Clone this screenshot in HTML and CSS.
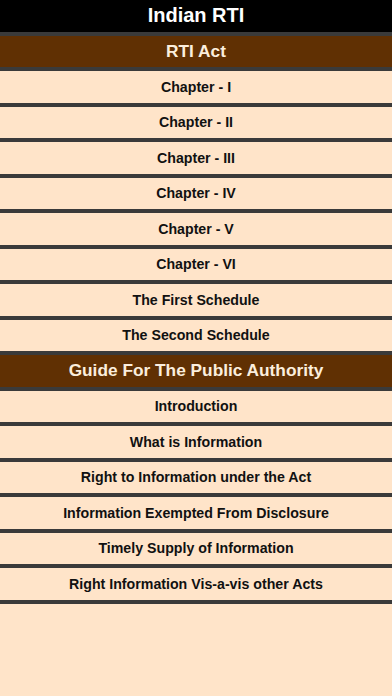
FILE: index.html
```html
<!DOCTYPE html>
<html>
<head>
<meta charset="utf-8">
<link rel="stylesheet" href="styles.css">
</head>
<body>
<div class="app">
  <div class="title">Indian RTI</div>
  <div class="section">RTI Act</div>
  <div class="item">Chapter - I</div>
  <div class="item">Chapter - II</div>
  <div class="item">Chapter - III</div>
  <div class="item">Chapter - IV</div>
  <div class="item">Chapter - V</div>
  <div class="item">Chapter - VI</div>
  <div class="item">The First Schedule</div>
  <div class="item">The Second Schedule</div>
  <div class="section">Guide For The Public Authority</div>
  <div class="item">Introduction</div>
  <div class="item">What is Information</div>
  <div class="item">Right to Information under the Act</div>
  <div class="item">Information Exempted From Disclosure</div>
  <div class="item">Timely Supply of Information</div>
  <div class="item">Right Information Vis-a-vis other Acts</div>
</div>
</body>
</html>
```
FILE: styles.css
```css
html, body {
  margin: 0;
  padding: 0;
  background: #ffe4c9;
  font-family: "Liberation Sans", Arial, sans-serif;
  font-weight: bold;
}
.app {
  display: flex;
  flex-direction: column;
  width: 392px;
  min-height: 696px;
  background: #ffe4c9;
}
.title, .section, .item {
  height: 31.5px;
  border-bottom: 4px solid #3a3a3a;
  display: flex;
  align-items: center;
  justify-content: center;
  white-space: nowrap;
}
.title {
  background: #000;
  color: #fff;
  font-size: 20px;
}
.section {
  background: #603003;
  color: #fbeedd;
  font-size: 17.3px;
}
.item {
  background: #ffe4c9;
  color: #111;
  font-size: 14.2px;
}
```
